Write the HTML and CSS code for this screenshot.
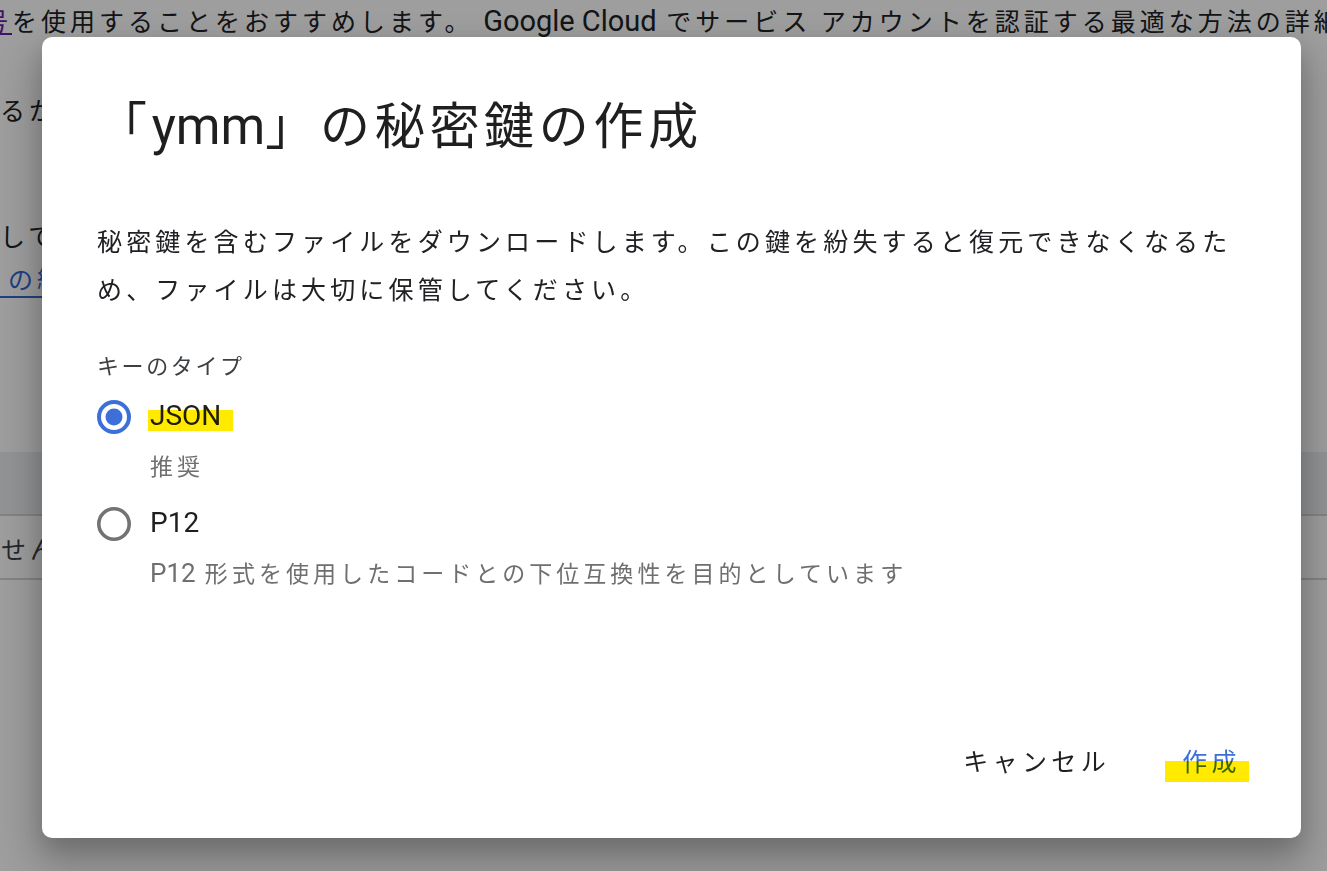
FILE: index.html
```html
<!DOCTYPE html>
<html lang="ja">
    <head>
        <meta charset="UTF-8">
        <meta name="viewport" content="width=device-width, initial-scale=1.0">
        <title>秘密鍵の作成</title>
        <link rel="stylesheet" href="styles.css">
    </head>
    <body>
        <main class="page">
            <p class="intro"><a class="visited" href="#">暗号</a>を使用することをおすすめします。 <span class="latin">Google Cloud</span> でサービス アカウントを認証する最適な方法の詳細</p>
            <p class="para">るかどうかを確認してください。</p>
            <p class="para lower">してください。<br><a class="link" href="#">の紹介</a></p>
            <div class="table">
                <div class="table-head"></div>
                <div class="table-row">せん</div>
            </div>
        </main>

        <div class="scrim">
            <div class="dialog">
                <h1 class="dialog-title">「<span class="latin">ymm</span>」の秘密鍵の作成</h1>
                <p class="dialog-text">秘密鍵を含むファイルをダウンロードします。この鍵を紛失すると復元できなくなるた<br>め、ファイルは大切に保管してください。</p>

                <div class="field-label">キーのタイプ</div>
                <div class="option">
                    <svg class="radio" width="34" height="34" viewBox="0 0 34 34">
                        <circle cx="17" cy="17" r="15" fill="none" stroke="#3c6fd8" stroke-width="4"/>
                        <circle cx="17" cy="17" r="8.5" fill="#3c6fd8"/>
                    </svg>
                    <span class="option-name mark mark-json"><span class="latin">JSON</span></span>
                </div>
                <div class="option-hint">推奨</div>

                <div class="option option-second">
                    <svg class="radio" width="34" height="34" viewBox="0 0 34 34">
                        <circle cx="17" cy="17" r="15.2" fill="none" stroke="#737373" stroke-width="3.6"/>
                    </svg>
                    <span class="option-name"><span class="latin">P12</span></span>
                </div>
                <div class="option-hint"><span class="latin">P12</span> 形式を使用したコードとの下位互換性を目的としています</div>

                <div class="actions">
                    <button class="btn">キャンセル</button>
                    <button class="btn btn-primary mark mark-create">作成</button>
                </div>
            </div>
        </div>
    </body>
</html>
```

FILE: styles.css
```css
*,
*::before,
*::after {
    box-sizing: border-box;
}

body {
    margin: 0;
    height: 100vh;
    overflow: hidden;
    background-color: #fff;
    color: #202124;
    font-family: "Noto Sans CJK JP", sans-serif;
}

.latin {
    font-family: Roboto, "Noto Sans CJK JP", sans-serif;
    font-size: 28px;
    letter-spacing: 0;
}

/* page behind the dialog */
.page {
    font-size: 25px;
    letter-spacing: 4px;
    line-height: 40px;
}

.page p {
    margin: 0;
    white-space: nowrap;
}

.intro {
    margin-left: -46px !important;
}

.intro .latin {
    font-size: 29px;
}

.visited {
    color: #681da8;
}

.para {
    padding-top: 48px;
}

.lower {
    padding-top: 85px;
    line-height: 43px;
}

.link {
    display: inline-block;
    margin-top: 1px;
    padding-left: 8px;
    line-height: 36px;
    color: #3367d6;
    text-decoration: none;
    border-bottom: 2px solid #3367d6;
}

.table {
    margin-top: 152px;
}

.table-head {
    height: 62px;
    background-color: #eceef0;
}

.table-row {
    height: 66px;
    line-height: 64px;
    padding-left: 1px;
    border-top: 2px solid #d3d5d8;
    border-bottom: 2px solid #d3d5d8;
    color: #3c4043;
}

/* modal */
.scrim {
    position: fixed;
    inset: 0;
    display: flex;
    align-items: center;
    justify-content: center;
    padding: 4px 0 0 16px;
    background-color: rgba(0, 0, 0, .38);
}

.dialog {
    width: 1259px;
    height: 801px;
    display: flex;
    flex-direction: column;
    padding: 55px 55px 0;
    background-color: #fff;
    border-radius: 10px;
    box-shadow: 0 22px 44px 8px rgba(0, 0, 0, .22), 0 10px 22px rgba(0, 0, 0, .14);
}

.dialog-title {
    margin: 0;
    font-size: 50px;
    font-weight: normal;
    line-height: 60px;
    letter-spacing: 4.7px;
    color: #1f1f1f;
}

.dialog-title .latin {
    font-size: 51px;
}

.dialog-text {
    margin: 59px 0 0;
    font-size: 25px;
    line-height: 48px;
    letter-spacing: 4.15px;
    color: #202124;
}

.field-label {
    margin-top: 36px;
    font-size: 22px;
    line-height: 32px;
    letter-spacing: 2.6px;
    color: #3c4043;
}

.option {
    display: flex;
    align-items: center;
    gap: 19px;
    height: 40px;
    margin-top: 17px;
}

.option-second {
    margin-top: 23px;
}

.radio {
    flex: none;
}

.option-name {
    display: inline-block;
    line-height: 40px;
    color: #1f1f1f;
}

.option-hint {
    margin: 12px 0 0 53px;
    font-size: 23px;
    line-height: 32px;
    letter-spacing: 4.05px;
    color: #6f6f6f;
}

.option-hint .latin {
    font-size: 26px;
}

.actions {
    margin-top: auto;
    display: flex;
    justify-content: flex-end;
    gap: 72px;
    padding: 0 5px 58px 0;
}

.btn {
    padding: 0;
    border: none;
    background: none;
    cursor: pointer;
    font-family: "Noto Sans CJK JP", sans-serif;
    font-size: 25px;
    line-height: 40px;
    letter-spacing: 4.4px;
    color: #1f1f1f;
}

.btn-primary {
    color: #3c6fd8;
}

/* yellow marker */
.mark {
    position: relative;
}

.mark::after {
    content: "";
    position: absolute;
    height: 21px;
    background-color: #ffea00;
    mix-blend-mode: multiply;
}

.mark-json::after {
    left: -2px;
    right: -12px;
    top: 14px;
}

.mark-create::after {
    left: -17px;
    right: -8px;
    top: 21px;
}
```
